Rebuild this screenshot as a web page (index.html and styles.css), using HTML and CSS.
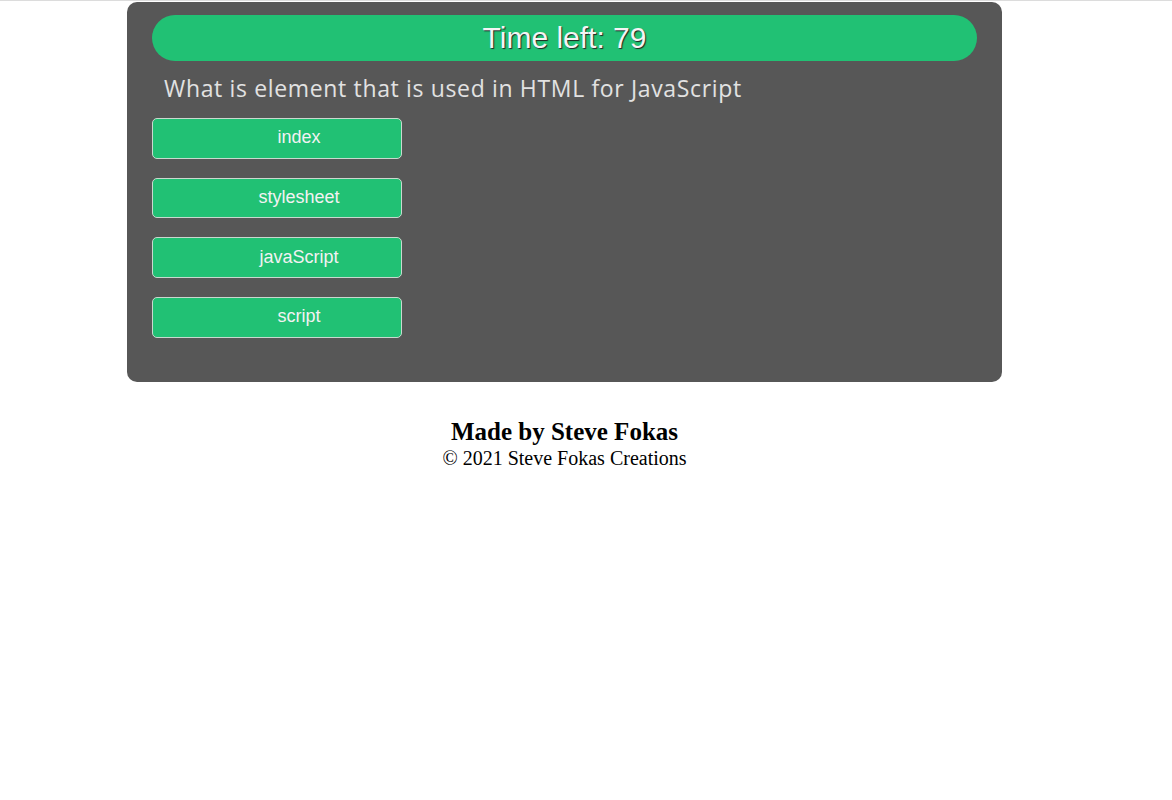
FILE: index.html
```html
<!DOCTYPE html>
<html lang="en">
<head>
<meta charset="utf-8">
<title>Quiz</title>
<link rel="stylesheet" href="styles.css">
</head>
<body>
<div class="topline"></div>
<main class="page">
  <section class="quiz">
    <div class="timer">Time left: 79</div>
    <p class="question">What is element that is used in HTML for JavaScript</p>
    <div class="answers">
      <button class="answer">index</button>
      <button class="answer">stylesheet</button>
      <button class="answer">javaScript</button>
      <button class="answer">script</button>
    </div>
  </section>
  <footer class="footer">
    <div class="made">Made by Steve Fokas</div>
    <div class="copy">© 2021 Steve Fokas Creations</div>
  </footer>
</main>
</body>
</html>
```

FILE: styles.css
```css
html, body {
  margin: 0;
  padding: 0;
  background: #ffffff;
}
.topline {
  height: 1px;
  background: #dcdcdc;
}
.page {
  width: 875px;
  margin-left: 127px;
  padding-top: 1px;
}
.quiz {
  background: #575757;
  border-radius: 10px;
  padding: 13px 25px 44px 25px;
}
.timer {
  height: 46px;
  border-radius: 23px;
  background: #21c174;
  color: #f4f4f4;
  font-family: "Liberation Sans", Arial, sans-serif;
  font-size: 30px;
  line-height: 46px;
  text-align: center;
  text-shadow: 1px 1px 1px #222;
}
.question {
  margin: 12px 0 0 12px;
  height: 33px;
  color: #e2e2e2;
  font-family: "Open Sans", "Noto Sans", sans-serif;
  font-size: 23px;
  line-height: 30px;
  letter-spacing: 0.65px;
}
.answers {
  display: flex;
  flex-direction: column;
  align-items: flex-start;
  gap: 19px;
  margin-top: 12px;
}
.answer {
  width: 250px;
  height: 40.67px;
  box-sizing: border-box;
  background: #21c174;
  border: 1px solid #c9d9cf;
  border-radius: 5px;
  padding: 0 0 1px 44px;
  color: #f2f2f2;
  font-family: "Liberation Sans", Arial, sans-serif;
  font-size: 18px;
  text-align: center;
}
.footer {
  text-align: center;
  font-family: "Liberation Serif", "Times New Roman", serif;
  color: #000;
  margin-top: 36px;
}
.made {
  font-weight: bold;
  font-size: 25px;
  line-height: 28px;
}
.copy {
  font-size: 20px;
  line-height: 24px;
}
```
